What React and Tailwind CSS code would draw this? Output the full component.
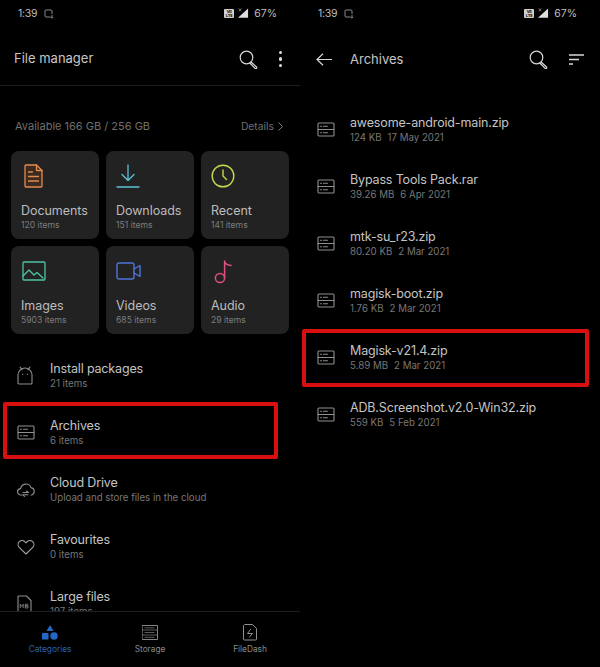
const font = { fontFamily: "Inter, 'Liberation Sans', sans-serif" };

function Svg({ size = 24, w, h, vb, color = "#8f8f8f", sw = 1.5, children }) {
  return (
    <svg width={w ?? size} height={h ?? size} viewBox={vb ?? `0 0 ${w ?? size} ${h ?? size}`} fill="none" stroke={color} strokeWidth={sw} strokeLinecap="round" strokeLinejoin="round" className="shrink-0">
      {children}
    </svg>
  );
}

function StatusBar() {
  return (
    <div className="h-[26px] shrink-0 flex items-center pl-[18px] pr-[23px] pt-[1px] text-[10.5px] text-[#bdbdbd]">
      <span className="tracking-[-0.3px]">1:39</span>
      <svg width="10" height="10" viewBox="0 0 10 10" fill="none" stroke="#8a8a8a" strokeWidth="1" className="ml-[7px]">
        <path d="M6.5 8H2a1 1 0 0 1-1-1V2a1 1 0 0 1 1-1h5a1 1 0 0 1 1 1v3" />
        <path d="M8 6v3M6.8 8l1.2 1.2L9.2 8" />
      </svg>
      <div className="ml-auto flex items-center">
        <div className="w-[10px] h-[9px] bg-[#cfcfcf] rounded-[1px] flex flex-col items-center justify-center text-black text-[4px] leading-[4px] font-bold">
          <span>Vo</span><span>LTE</span>
        </div>
        <svg width="11" height="11" viewBox="0 0 12 11" className="ml-[4px]">
          <path d="M11 0v10H0z" fill="#dedede" />
          <path d="M1 0l2.5 3M3.5 0L1 3" stroke="#bbb" strokeWidth="0.7" />
        </svg>
        <span className="ml-[5px]">67%</span>
      </div>
    </div>
  );
}

function SearchIcon() {
  return (
    <svg width="19" height="19" viewBox="0 0 19 19" fill="none" stroke="#d6d6d6" strokeWidth="1.2" className="shrink-0">
      <circle cx="7.5" cy="7.5" r="6.3" />
      <path d="M12 12l5.5 5a1 1 0 0 1-1.6 1.2L10.8 13" />
    </svg>
  );
}

function ArchiveIcon() {
  return (
    <Svg w={18} h={15} color="#8f8f8f" sw={1.1}>
      <rect x="1" y="1" width="16" height="13" rx="1" />
      <path d="M1 7.5h16M3.5 4.2h1M6.5 4.2h4M3.5 10.8h1M6.5 10.8h4" />
    </Svg>
  );
}

const DocIcon = () => (
  <Svg w={19} h={24} color="#e58a4e" sw={1.3}>
    <path d="M2 1h10.500L18 6.500V22a1 1 0 0 1-1 1H2a1 1 0 0 1-1-1V2a1 1 0 0 1 1-1z" fill="#3b2a20" />
    <path d="M12.500 1v5.500H18M4.500 8h4M4.500 12.500h10M4.500 17h10" />
  </Svg>
);
const DownloadIcon = () => (
  <Svg w={24} h={24} color="#5cc3d6" sw={1.3}>
    <path d="M12 1v15.500M6 10.500l6 6 6-6M1 23h22" />
  </Svg>
);
const ClockIcon = () => (
  <Svg w={24} h={24} color="#c8d84c" sw={1.4}>
    <circle cx="12" cy="12" r="10.8" />
    <path d="M12 6v6l3.5 3.5" />
  </Svg>
);
const ImageIcon = () => (
  <Svg w={24} h={20} color="#4fc4a4" sw={1.3}>
    <rect x="1" y="1" width="22" height="18" rx="1" />
    <path d="M1 15l6-6 5 5 3-2.5 6 5.5" />
  </Svg>
);
const VideoIcon = () => (
  <Svg w={26} h={18} color="#4f74da" sw={1.4}>
    <rect x="1" y="1" width="17" height="16" rx="2" />
    <path d="M18 7l6-3.5v11L18 11" />
  </Svg>
);
const NoteIcon = () => (
  <Svg w={20} h={25} color="#e0507c" sw={1.5}>
    <circle cx="6" cy="19" r="4.6" />
    <path d="M10.6 19V2c0 3 3 4 6.5 4.5" />
  </Svg>
);
const AndroidIcon = () => (
  <Svg w={16} h={19} color="#8f8f8f" sw={1.1}>
    <path d="M1 17V9a7 7 0 0 1 14 0v8a1 1 0 0 1-1 1H2a1 1 0 0 1-1-1z" />
    <path d="M3 1l2 2.8M13 1l-2 2.8M5.5 8.2h.4M10.2 8.2h.4" />
  </Svg>
);
const CloudIcon = () => (
  <Svg w={18} h={16} color="#8f8f8f" sw={1.1}>
    <path d="M4.5 13H4a3.2 3.2 0 0 1-.4-6.4A5.4 5.4 0 0 1 14 5.6a3.8 3.8 0 0 1 .5 7.4H14" />
    <path d="M6 10.5h5.5M6 12.8h5M9.5 9l1.8 1.5M7.5 14.3l-1.8-1.5" />
  </Svg>
);
const HeartIcon = () => (
  <Svg w={18} h={16} color="#a5a5a5" sw={1.1}>
    <path d="M9 15L2.2 8.4A4 4 0 0 1 8 2.8l1 1 1-1a4 4 0 0 1 5.8 5.6z" />
  </Svg>
);
const MbIcon = () => (
  <svg width="15" height="18" viewBox="0 0 15 18" fill="none" stroke="#8f8f8f" strokeWidth="1.1" className="shrink-0">
    <path d="M1.5 1h8L14 5.5V16a1 1 0 0 1-1 1H2a1 1 0 0 1-1-1V1.5z" />
    <path d="M3.2 13V9.2l1.5 2.2 1.500-2.200V13M8.3 9.2V13h2a1 1 0 0 0 0-2h-2 1.8a.9.9 0 0 0 0-1.800z" strokeWidth="0.8" />
  </svg>
);

function Card({ icon, title, sub, iconPad }) {
  return (
    <div className="h-[88px] rounded-[8px] bg-[#222222] pl-[10px] flex flex-col">
      <div className={`h-[43px] pt-[7px] flex items-center ${iconPad}`}>{icon}</div>
      <div className="text-[12.5px] leading-[16px] tracking-[-0.05px] text-[#bcbcbc] mt-[9px] whitespace-nowrap">{title}</div>
      <div className="text-[8.6px] leading-[12px] text-[#7d7d7d] whitespace-nowrap">{sub}</div>
    </div>
  );
}

function Row({ icon, title, sub, box }) {
  return (
    <div className="relative h-[57px] flex items-center pl-[17px]">
      <div className="w-[33px] flex items-center">{icon}</div>
      <div className="min-w-0">
        <div className="text-[12.5px] leading-[16px] tracking-[-0.15px] text-[#c4c4c4] whitespace-nowrap">{title}</div>
        <div className="text-[9.7px] leading-[13px] text-[#777777] whitespace-nowrap">{sub}</div>
      </div>
      {box}
    </div>
  );
}

const cards = [
  [<DocIcon />, "Documents", "120 items", "pl-[3px]"],
  [<DownloadIcon />, "Downloads", "151 items", "pl-0"],
  [<ClockIcon />, "Recent", "141 items", "pl-[0px]"],
  [<ImageIcon />, "Images", "5903 items", "pl-[1px]"],
  [<VideoIcon />, "Videos", "685 items", "pl-[0px]"],
  [<NoteIcon />, "Audio", "29 items", "pl-[3px]"],
];

const files = [
  ["awesome-android-main.zip", "124 KB", "17 May 2021"],
  ["Bypass Tools Pack.rar", "39.26 MB", "6 Apr 2021"],
  ["mtk-su_r23.zip", "80.20 KB", "2 Mar 2021"],
  ["magisk-boot.zip", "1.76 KB", "2 Mar 2021"],
  ["Magisk-v21.4.zip", "5.89 MB", "2 Mar 2021"],
  ["ADB.Screenshot.v2.0-Win32.zip", "559 KB", "5 Feb 2021"],
];

function NavItem({ icon, label, color }) {
  return (
    <div className="flex-1 flex flex-col items-center">
      <div className="h-[22px] flex items-center justify-center">{icon}</div>
      <div className="text-[8.3px] leading-[12px]" style={{ color }}>{label}</div>
    </div>
  );
}

export default function App() {
  return (
    <div className="w-[600px] h-[667px] bg-black flex overflow-hidden" style={font}>
      <div className="w-[300px] h-full flex flex-col">
        <StatusBar />
        <div className="h-[60px] shrink-0 flex items-center border-b border-[#1e1e1e] pl-[14px] pt-[7px] pr-[18px]">
          <span className="text-[13px] text-[#c6c6c6]">File manager</span>
          <div className="ml-auto flex items-center">
            <SearchIcon />
            <div className="ml-[21px] flex flex-col gap-[3px]">
              <span className="w-[3.5px] h-[3.5px] rounded-full bg-[#dcdcdc]" />
              <span className="w-[3.5px] h-[3.5px] rounded-full bg-[#dcdcdc]" />
              <span className="w-[3.5px] h-[3.5px] rounded-full bg-[#dcdcdc]" />
            </div>
          </div>
        </div>
        <div className="flex-1 min-h-0 overflow-hidden">
          <div className="h-[65px] flex items-center justify-between pl-[15px] pr-[17px] pt-[16px] text-[11px] text-[#6f6f6f]">
            <span>Available 166 GB / 256 GB</span>
            <span className="flex items-center gap-[4px] text-[10.3px]">
              Details
              <svg width="5" height="9" viewBox="0 0 5 9" fill="none" stroke="#7a7a7a" strokeWidth="1"><path d="M.5.5l4 4-4 4" /></svg>
            </span>
          </div>
          <div className="grid grid-cols-[88px_88px_88px] gap-[7px] pl-[11px]">
            {cards.map(([icon, t, s, p]) => <Card key={t} icon={icon} title={t} sub={s} iconPad={p} />)}
          </div>
          <div className="mt-[13px]">
            <Row icon={<AndroidIcon />} title="Install packages" sub="21 items" />
            <Row
              icon={<ArchiveIcon />}
              title="Archives"
              sub="6 items"
              box={<div className="absolute left-[3px] top-[-2px] w-[275px] h-[57px] border-[4px] border-[#d80f0f] rounded-[2px]" />}
            />
            <Row icon={<CloudIcon />} title="Cloud Drive" sub="Upload and store files in the cloud" />
            <Row icon={<HeartIcon />} title="Favourites" sub="0 items" />
            <Row icon={<MbIcon />} title="Large files" sub="197 items" />
          </div>
        </div>
        <div className="h-[56px] shrink-0 border-t border-[#1e1e1e] bg-black pt-[9px] flex">
          <NavItem
            label="Categories"
            color="#2b62ad"
            icon={
              <svg width="16" height="15" viewBox="0 0 16 15" fill="#2368c4">
                <path d="M8 0l3.5 6h-7z" />
                <rect x="0" y="8" width="6.5" height="6.5" rx=".5" />
                <circle cx="12" cy="11" r="3.7" />
              </svg>
            }
          />
          <NavItem
            label="Storage"
            color="#8a8a8a"
            icon={
              <Svg w={16} h={15} color="#858585" sw={1}>
                <rect x=".5" y=".5" width="15" height="14" />
                <path d="M.5 5h15M.5 10h15M3 2.8h9M3 7.5h9M3 12.3h9" strokeWidth=".7" />
              </Svg>
            }
          />
          <NavItem
            label="FileDash"
            color="#8a8a8a"
            icon={
              <Svg w={14} h={17} color="#909090" sw={1}>
                <path d="M2 .5h7.5L13.5 4.500V15a1 1 0 0 1-1 1H1.500a1 1 0 0 1-1-1V2z" />
                <path d="M7.500 5.500L4.500 9.500H9.500L6.500 13" />
              </Svg>
            }
          />
        </div>
      </div>

      <div className="w-[300px] h-full flex flex-col">
        <StatusBar />
        <div className="h-[60px] shrink-0 flex items-center pl-[16px] pt-[7px] pr-[16px]">
          <svg width="16" height="13" viewBox="0 0 16 13" fill="none" stroke="#d6d6d6" strokeWidth="1.2" className="shrink-0">
            <path d="M16 6.500H1M7 .8L1 6.500l6 5.700" />
          </svg>
          <span className="ml-[18px] text-[13px] text-[#c6c6c6]">Archives</span>
          <div className="ml-auto flex items-center">
            <SearchIcon />
            <svg width="15" height="11" viewBox="0 0 15 11" stroke="#d6d6d6" strokeWidth="1.300" className="ml-[21px]">
              <path d="M0 1h15M0 5.500h10M0 10h4" />
            </svg>
          </div>
        </div>
        <div className="pt-[15px]">
          {files.map(([name, size, date], i) => (
            <Row
              key={name}
              icon={<ArchiveIcon />}
              title={name}
              sub={<span className="flex gap-[6px]"><span>{size}</span><span>{date}</span></span>}
              box={i === 4 ? <div className="absolute left-[2px] top-0 w-[287px] h-[58px] border-[4px] border-[#d80f0f] rounded-[2px]" /> : null}
            />
          ))}
        </div>
      </div>
    </div>
  );
}
